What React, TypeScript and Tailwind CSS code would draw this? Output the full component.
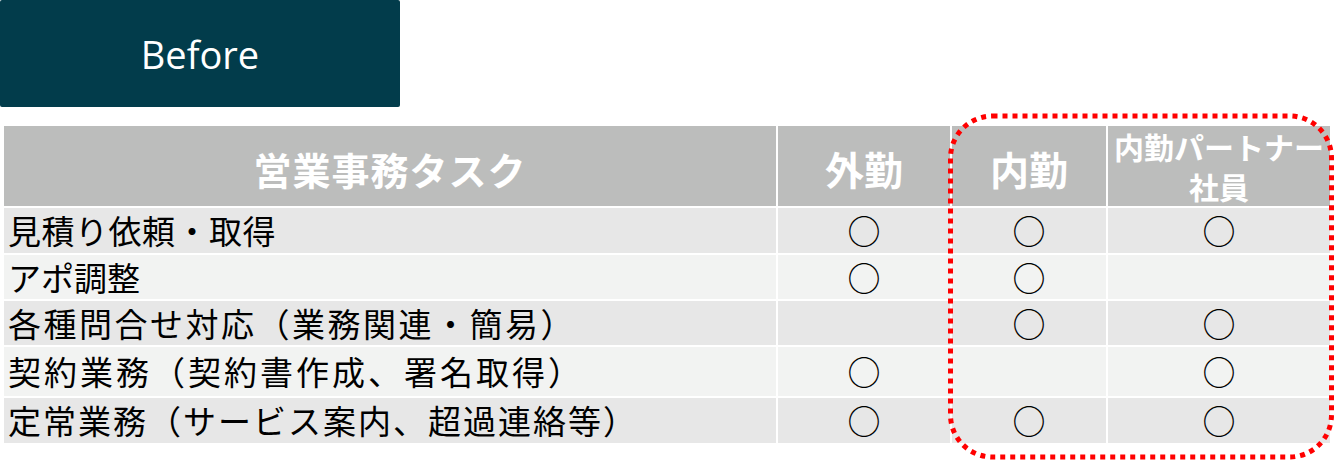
import React from "react";

const rows = [
  { label: "見積り依頼・取得", marks: [true, true, true], h: "h-[45px]", bg: "bg-[#e7e7e7]", tr: "tracking-[0.5px]" },
  { label: "アポ調整", marks: [true, true, false], h: "h-[44px]", bg: "bg-[#f2f3f2]", tr: "tracking-[0px]" },
  { label: "各種問合せ対応（業務関連・簡易）", marks: [false, true, true], h: "h-[44px]", bg: "bg-[#e7e7e7]", tr: "tracking-[2.5px]" },
  { label: "契約業務（契約書作成、署名取得）", marks: [true, false, true], h: "h-[49px]", bg: "bg-[#f2f3f2]", tr: "tracking-[3px]" },
  { label: "定常業務（サービス案内、超過連絡等）", marks: [true, true, true], h: "h-[45px]", bg: "bg-[#e7e7e7]", tr: "tracking-[2px]" },
];

const cols = "grid grid-cols-[772px_172px_154px_222px] gap-x-[2px]";

const App = () => {
  return (
    <div className="relative w-[1336px] h-[467px] bg-white overflow-hidden font-['Noto_Sans_CJK_JP',sans-serif]">
      <div className="w-[400px] h-[107px] rounded-[2px] bg-[#023c4b] flex items-center justify-center">
        <span className="text-white text-[38px] font-['Open_Sans',sans-serif] leading-none">Before</span>
      </div>

      <div className="mt-[19px] ml-[4px] flex flex-col gap-[2px]">
        <div className={`${cols} h-[78px] mb-[2px] text-white font-bold`}>
          <div className="bg-[#bcbdbc] flex items-center justify-center pt-[5px] text-[38px] tracking-[1px]">営業事務タスク</div>
          <div className="bg-[#bcbdbc] flex items-center justify-center pt-[5px] text-[39px]">外勤</div>
          <div className="bg-[#bcbdbc] flex items-center justify-center pt-[5px] text-[39px]">内勤</div>
          <div className="bg-[#bcbdbc] flex flex-col items-center justify-center text-[30px] leading-[40px]">
            <span>内勤パートナー</span>
            <span>社員</span>
          </div>
        </div>

        {rows.map((r) => (
          <div key={r.label} className={`${cols} ${r.h} text-black`}>
            <div className={`${r.bg} ${r.tr} flex items-center pl-[4px] text-[33px] leading-none whitespace-nowrap`}>
              {r.label}
            </div>
            {r.marks.map((m, i) => (
              <div key={i} className={`${r.bg} flex items-center justify-center text-[33px] leading-none`}>
                {m ? "○" : ""}
              </div>
            ))}
          </div>
        ))}
      </div>

      <svg className="absolute left-0 top-0 pointer-events-none" width="1336" height="467">
        <rect
          x="950.5"
          y="116"
          width="381"
          height="341"
          rx="42"
          fill="none"
          stroke="#ff0000"
          strokeWidth="5"
          strokeDasharray="5 5"
        />
      </svg>
    </div>
  );
};

export default App;
